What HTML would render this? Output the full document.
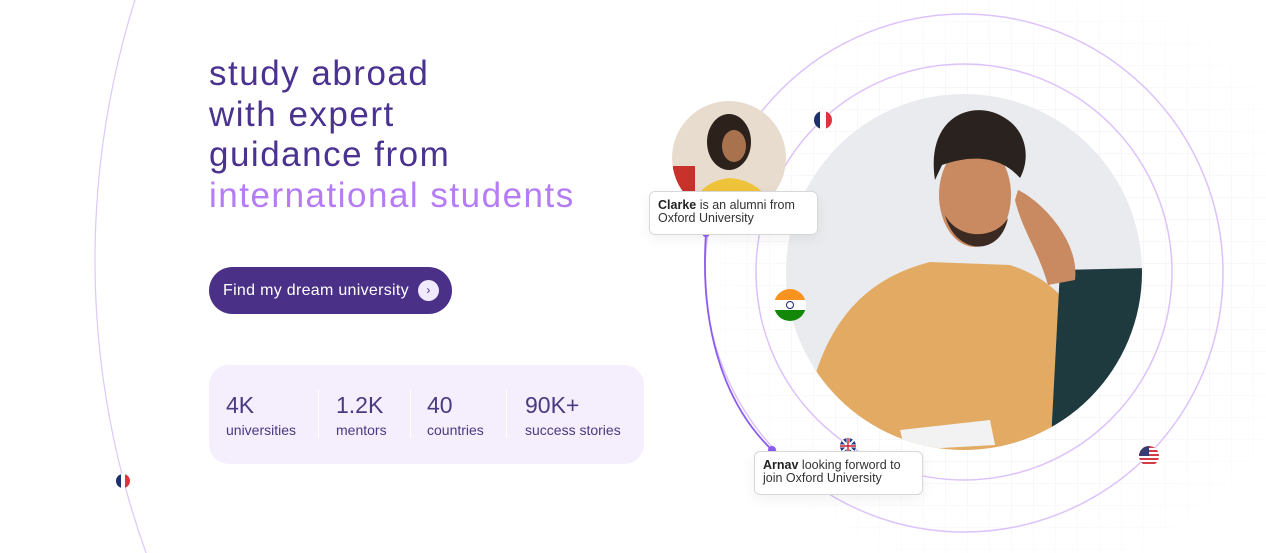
<!DOCTYPE html>
<html><head><meta charset="utf-8"><style>
*{margin:0;padding:0;box-sizing:border-box}
html,body{width:1266px;height:553px;overflow:hidden}
body{background:#fff;font-family:"Liberation Sans",sans-serif;position:relative}
.abs{position:absolute}
h1{position:absolute;left:209px;top:54px;font-weight:400;font-size:35px;line-height:40.5px;color:#4a3290;letter-spacing:1.5px}
h1 span{color:#b57cf5}
.btn{left:209px;top:267px;width:243px;height:47px;border-radius:24px;background:#4a3187;color:#fff;font-size:16px;line-height:47px;padding-left:14px;letter-spacing:0.3px}
.btn i{position:absolute;left:209px;top:13px;width:21px;height:21px;border-radius:50%;background:#f1e9fd;color:#4a3187;font-style:normal;font-size:12px;line-height:21px;text-align:center}
.stats{left:209px;top:365px;width:435px;height:99px;border-radius:20px;background:#f5eefd}
.st{position:absolute;top:25px;color:#4a3a80}
.st b{display:block;font-weight:400;font-size:23px;line-height:30px}
.st s{display:block;text-decoration:none;font-size:14px;color:#4a3a80;margin-top:2px}
.sep{position:absolute;top:25px;width:1px;height:48px;background:#fff}
.card{background:#fff;border:1px solid #d8d8d8;border-radius:6px;font-size:12.5px;line-height:13px;color:#333;padding:7px 8px;box-shadow:0 4px 14px rgba(0,0,0,.06);white-space:nowrap}
.card b{color:#222;font-weight:700}
</style></head><body>
<svg class="abs" style="left:0;top:0" width="1266" height="553">
<defs>
<pattern id="g" width="22" height="22" patternUnits="userSpaceOnUse"><path d="M22 0V22M0 22H22" stroke="#efeef6" stroke-width="1" fill="none"/></pattern>
<radialGradient id="fade" cx="0.55" cy="0.5" r="0.6"><stop offset="0.6" stop-color="#fff" stop-opacity="0"/><stop offset="1" stop-color="#fff" stop-opacity="1"/></radialGradient>
<clipPath id="c1"><circle cx="964" cy="272" r="178"/></clipPath>
<clipPath id="c2"><circle cx="729" cy="158" r="57"/></clipPath>
<clipPath id="fr1"><circle cx="823" cy="120" r="9"/></clipPath>
<clipPath id="fr2"><circle cx="123" cy="481" r="7"/></clipPath>
<clipPath id="uk"><circle cx="848" cy="446" r="8"/></clipPath>
</defs>
<rect x="720" y="0" width="546" height="553" fill="url(#g)"/>
<rect x="700" y="0" width="566" height="553" fill="url(#fade)"/>
<circle cx="960" cy="260" r="865" fill="none" stroke="#dcc8fb" stroke-width="1.2"/>
<circle cx="964" cy="273" r="259" fill="none" stroke="#dcc3fb" stroke-width="1.5"/>
<circle cx="964" cy="272" r="208" fill="none" stroke="#dcc3fb" stroke-width="1.5"/>
<g clip-path="url(#c1)">
<rect x="780" y="90" width="370" height="370" fill="#e9ebee"/>
<path d="M800 460 C810 330 860 280 930 262 L1010 265 C1070 285 1100 330 1110 460Z" fill="#e2aa63"/>
<path d="M1060 270 L1150 268 L1150 460 L1050 460 Z" fill="#1f3a3f"/>
<ellipse cx="975" cy="195" rx="36" ry="52" fill="#c98a62"/>
<path d="M935 180 C925 115 975 98 1005 118 C1028 132 1030 160 1020 178 C1000 155 970 155 942 165Z" fill="#2a221e"/>
<path d="M945 215 C955 255 1000 258 1008 218 C995 240 958 240 945 215Z" fill="#3a2a22"/>
<path d="M1018 190 C1040 200 1080 240 1075 280 L1048 285 C1038 250 1022 230 1015 200Z" fill="#c98a62"/>
<path d="M900 430 L990 420 L995 445 L905 450Z" fill="#f2f2f2"/>
</g>
<g clip-path="url(#c2)">
<rect x="670" y="100" width="120" height="120" fill="#e8dccf"/>
<path d="M690 215 C695 190 710 180 730 178 C755 180 770 195 775 215Z" fill="#efc43a"/>
<ellipse cx="729" cy="142" rx="22" ry="28" fill="#2d211b"/>
<ellipse cx="734" cy="146" rx="12" ry="16" fill="#a8724e"/>
<rect x="673" y="166" width="22" height="50" fill="#c9312b"/>
</g>
<path d="M706 233 C700 320 720 400 772 450" fill="none" stroke="#8b5cf0" stroke-width="1.8"/>
<circle cx="706" cy="233" r="4" fill="#8b5cf0"/>
<circle cx="772" cy="450" r="4" fill="#8b5cf0"/>
<g clip-path="url(#fr1)"><rect x="814" y="111" width="18" height="18" fill="#fff"/><rect x="814" y="111" width="6" height="18" fill="#1c2f6e"/><rect x="826" y="111" width="6" height="18" fill="#e0323c"/></g>
<g clip-path="url(#fr2)"><rect x="116" y="474" width="14" height="14" fill="#fff"/><rect x="116" y="474" width="5" height="14" fill="#1c2f6e"/><rect x="125" y="474" width="5" height="14" fill="#e0323c"/></g>
<g><clipPath id="in"><circle cx="790" cy="305" r="16"/></clipPath><g clip-path="url(#in)"><rect x="774" y="289" width="32" height="11" fill="#f7931e"/><rect x="774" y="300" width="32" height="10" fill="#fff"/><rect x="774" y="310" width="32" height="11" fill="#138808"/></g><circle cx="790" cy="305" r="3.5" fill="none" stroke="#1a237e" stroke-width="1"/></g>
<g clip-path="url(#uk)"><rect x="840" y="438" width="16" height="16" fill="#1f3b84"/><path d="M840 438L856 454M856 438L840 454" stroke="#fff" stroke-width="2"/><path d="M840 446H856M848 438V454" stroke="#fff" stroke-width="3"/><path d="M840 446H856M848 438V454" stroke="#d02030" stroke-width="1.4"/></g>
<g><clipPath id="us"><circle cx="1149" cy="456" r="10"/></clipPath><g clip-path="url(#us)"><rect x="1139" y="446" width="20" height="20" fill="#fff"/><path d="M1139 447H1159M1139 451H1159M1139 455H1159M1139 459H1159M1139 463H1159" stroke="#d43a48" stroke-width="2"/><rect x="1139" y="446" width="10" height="10" fill="#3c3b6e"/></g></g>
</svg>
<h1>study abroad<br>with expert<br>guidance from<br><span>international students</span></h1>
<div class="abs btn">Find my dream university<i>›</i></div>
<div class="abs stats">
<div class="st" style="left:17px"><b>4K</b><s>universities</s></div>
<div class="sep" style="left:109px"></div>
<div class="st" style="left:127px"><b>1.2K</b><s>mentors</s></div>
<div class="sep" style="left:201px"></div>
<div class="st" style="left:218px"><b>40</b><s>countries</s></div>
<div class="sep" style="left:297px"></div>
<div class="st" style="left:316px"><b>90K+</b><s>success stories</s></div>
</div>
<div class="abs card" style="left:649px;top:191px;width:169px;height:44px"><b>Clarke</b> is an alumni from<br>Oxford University</div>
<div class="abs card" style="left:754px;top:451px;width:169px;height:44px"><b>Arnav</b> looking forword to<br>join Oxford University</div>
</body></html>
